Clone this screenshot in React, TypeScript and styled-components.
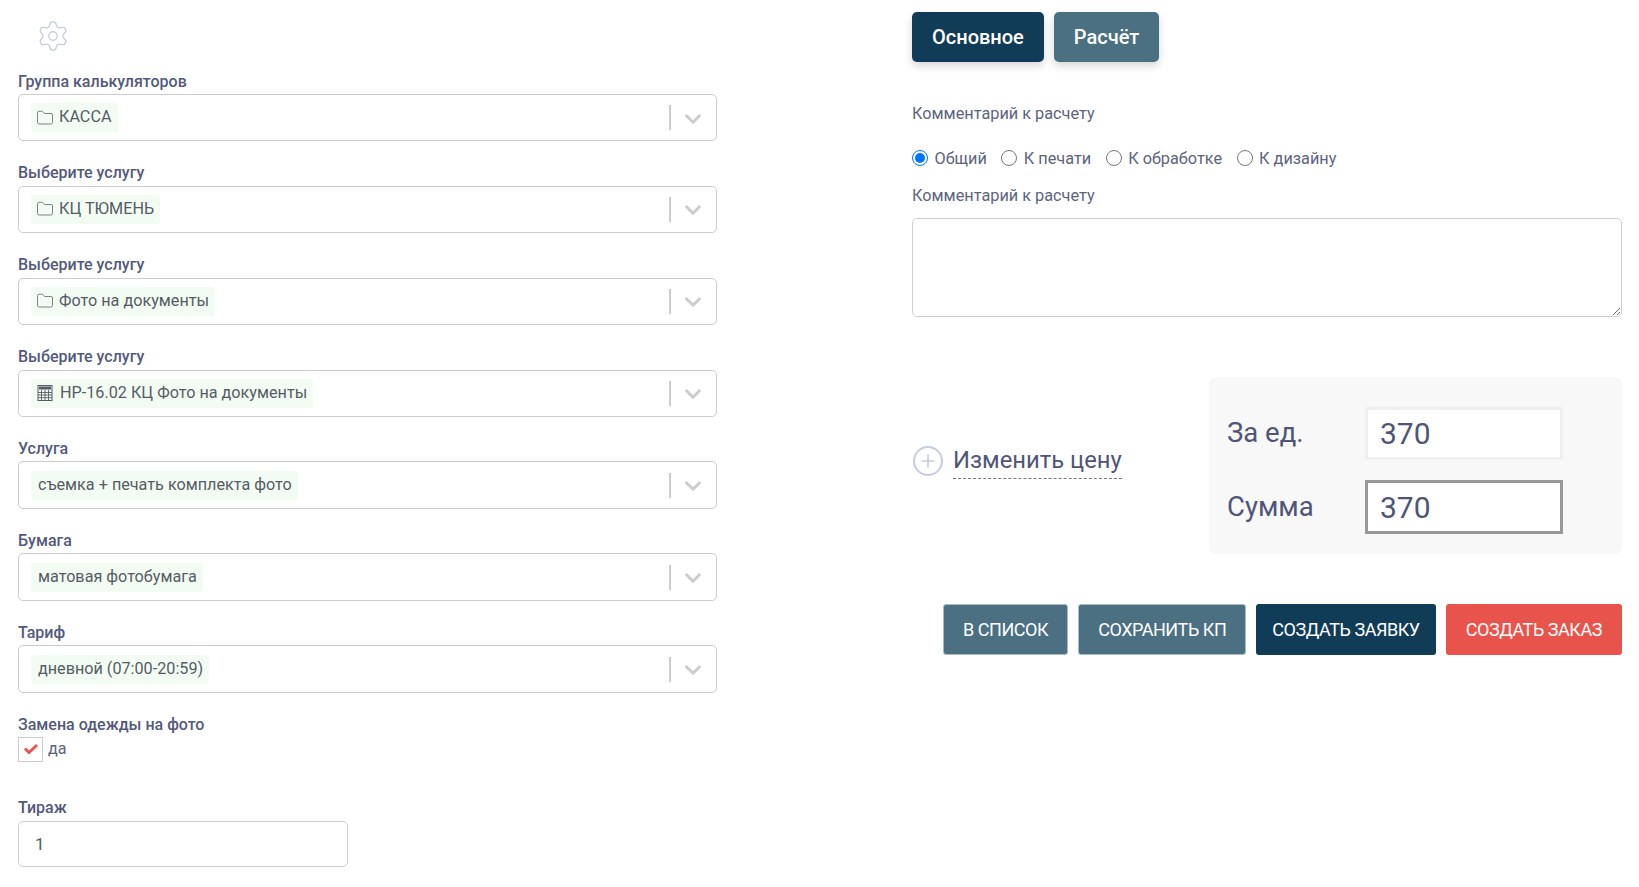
import React from "react";
import styled, { createGlobalStyle } from "styled-components";
import { Settings, Folder, ChevronDown, Plus } from "lucide-react";

const Global = createGlobalStyle`
  html, body { margin: 0; padding: 0; background: #fff; }
  body { font-family: Roboto, "Liberation Sans", sans-serif; color: #4f5578; }
  * { box-sizing: border-box; }
`;

const Page = styled.div`
  width: 1639px;
  height: 887px;
  overflow: hidden;
  display: grid;
  grid-template-columns: 912px 716px;
  background: #fff;
`;

const LeftColumn = styled.div`
  padding: 19px 0 0 18px;
  width: 716px;
`;

const GearRow = styled.div`
  height: 34px;
  padding-left: 18px;
  margin-bottom: 18px;
  color: #c3cce0;
  display: flex;
  align-items: center;
`;

const Field = styled.div<{ $tall?: boolean }>`
  margin-bottom: ${(p) => (p.$tall ? 20.85 : 21.85)}px;
`;

const Label = styled.div`
  font-size: 16px;
  line-height: 22px;
  margin-top: -0.4px;
  margin-bottom: 1.4px;
  font-weight: 500;
  color: #535a7c;
  white-space: nowrap;
`;

const SelectBox = styled.div<{ $tall?: boolean }>`
  width: 699px;
  height: ${(p) => (p.$tall ? 48 : 47)}px;
  border: 1px solid #ccc;
  border-radius: 5px;
  display: flex;
  align-items: center;
  padding-left: 12px;
  background: #fff;
`;

const Chip = styled.div`
  height: 29px;
  display: inline-flex;
  align-items: center;
  gap: 5px;
  padding: 0 6px 2px 5px;
  background: #f3fcf3;
  border-radius: 4px;
  font-size: 16.2px;
  color: #555c66;
  white-space: nowrap;
`;

const PlainChipText = styled.span`
  padding-left: 2px;
`;

const CalcChipText = styled.span`
  padding-left: 1px;
`;

const IconSlot = styled.span`
  display: flex;
  padding-top: 2px;
`;

const Indicators = styled.div`
  margin-left: auto;
  display: flex;
  align-items: center;
  height: 25px;
  padding-right: 8px;
  color: #cccccc;
`;

const Divider = styled.span`
  width: 2px;
  height: 25px;
  background: #ccc;
  margin-right: 7px;
`;

const ChevronBox = styled.span`
  width: 30px;
  height: 30px;
  display: flex;
  align-items: center;
  justify-content: center;
  padding-top: 2px;
`;

const CheckRow = styled.div`
  display: flex;
  align-items: flex-start;
  gap: 5px;
  margin-bottom: 35px;
`;

const CheckBox = styled.span`
  width: 25px;
  height: 25px;
  border: 1px solid #ccc;
  display: flex;
  align-items: center;
  justify-content: center;
  color: #e8534b;
`;

const CheckLabel = styled.span`
  font-size: 16.2px;
  line-height: 24px;
  color: #5d6480;
`;

const NumberInput = styled.div`
  width: 330px;
  height: 46px;
  margin-top: 2px;
  border: 1px solid #ccd0da;
  border-radius: 5px;
  display: flex;
  align-items: center;
  padding-left: 16px;
  font-size: 17px;
  color: #555c66;
`;

const RightColumn = styled.div`
  width: 710px;
  padding-top: 12px;
  display: flex;
  flex-direction: column;
`;

const Tabs = styled.div`
  display: flex;
  gap: 10px;
  margin-bottom: 41px;
`;

const Tab = styled.div<{ $active?: boolean }>`
  height: 50px;
  padding: 0 20px;
  display: flex;
  align-items: center;
  border-radius: 5px;
  color: #fff;
  font-size: 20px;
  font-weight: 500;
  background: ${(p) => (p.$active ? "#113c57" : "#4a7082")};
  box-shadow: 0 4px 8px rgba(0, 0, 0, 0.16);
`;

const PlainText = styled.div`
  font-size: 16.3px;
  line-height: 22px;
  color: #5d6480;
`;

const RadioRow = styled.div`
  display: flex;
  align-items: center;
  gap: 14.5px;
  margin: 22px 0 16px;
  height: 22px;
`;

const RadioItem = styled.label`
  display: flex;
  align-items: center;
  gap: 6.5px;
  font-size: 16.3px;
  color: #5d6480;
`;

const RadioDot = styled.span<{ $on?: boolean }>`
  width: 16px;
  height: 16px;
  border-radius: 50%;
  border: ${(p) => (p.$on ? "1.5px solid #0075ff" : "1px solid #767676")};
  background: #fff;
  display: flex;
  align-items: center;
  justify-content: center;
  &::after {
    content: "";
    display: ${(p) => (p.$on ? "block" : "none")};
    width: 10px;
    height: 10px;
    border-radius: 50%;
    background: #0075ff;
  }
`;

const CommentArea = styled.textarea`
  display: block;
  width: 710px;
  height: 99px;
  margin-top: 11px;
  border: 1px solid #ccd0da;
  border-radius: 5px;
  background: #fff;
  outline: none;
`;

const PriceRow = styled.div`
  display: flex;
  align-items: center;
  justify-content: space-between;
  margin-top: 60px;
`;

const ChangePrice = styled.div`
  display: flex;
  align-items: center;
  padding-left: 1px;
  margin-bottom: 10px;
  gap: 10px;
`;

const PlusCircle = styled.span`
  width: 30px;
  height: 30px;
  border: 2px solid #c3cce0;
  border-radius: 50%;
  color: #c3cce0;
  display: flex;
  align-items: center;
  justify-content: center;
`;

const ChangeLink = styled.span`
  font-size: 23.8px;
  line-height: 36px;
  color: #4f5578;
  border-bottom: 1px dashed #777;
`;

const PricePanel = styled.div`
  width: 413px;
  height: 177px;
  background: #f8f8f8;
  border-radius: 7px;
  padding: 30px 0 0 18px;
`;

const PriceLine = styled.div`
  display: flex;
  align-items: center;
  margin-bottom: 20px;
`;

const PriceLabel = styled.span`
  width: 138px;
  padding-bottom: 2px;
  font-size: 27.5px;
  color: #4f5578;
`;

const PriceInput = styled.div<{ $strong?: boolean }>`
  width: 198px;
  height: ${(p) => (p.$strong ? 54 : 53)}px;
  background: #fff;
  border: 3px solid ${(p) => (p.$strong ? "#999" : "#f0f0f0")};
  display: flex;
  align-items: center;
  padding-left: 12px;
  font-size: 30px;
  color: #4f5578;
`;

const Actions = styled.div`
  display: flex;
  justify-content: flex-end;
  gap: 10px;
  margin-top: 50px;
`;

const ActionButton = styled.div<{ $bg: string; $edge?: boolean; $pad?: number }>`
  height: 51px;
  padding: 0 ${(p) => p.$pad ?? 19}px;
  display: flex;
  align-items: center;
  border-radius: 3px;
  background: ${(p) => p.$bg};
  border: ${(p) => (p.$edge ? "1px solid #a9bbc9" : "none")};
  color: #fff;
  font-size: 18px;
  letter-spacing: -0.45px;
  white-space: nowrap;
`;

const GridCalculator = () => (
  <svg width="18" height="18" viewBox="0 0 18 18" fill="none" stroke="currentColor" strokeWidth="1">
    <rect x="2" y="1.5" width="14" height="15" />
    <rect x="3" y="2.5" width="12" height="3" fill="currentColor" stroke="none" />
    <path d="M2 8.5h14M2 11h14M2 13.7h14M5.5 6v10.5M9 6v10.5M12.5 6v10.5" strokeWidth="0.9" />
  </svg>
);

const RedCheck = () => (
  <svg width="16" height="12" viewBox="0 0 16 12" fill="none" stroke="currentColor" strokeWidth="3">
    <path d="M2 5.5l4 4 8-7.5" />
  </svg>
);

const selects: { label: string; value: string; icon?: "folder" | "calc"; tall?: boolean }[] = [
  { label: "Группа калькуляторов", value: "КАССА", icon: "folder" },
  { label: "Выберите услугу", value: "КЦ ТЮМЕНЬ", icon: "folder" },
  { label: "Выберите услугу", value: "Фото на документы", icon: "folder" },
  { label: "Выберите услугу", value: "НР-16.02 КЦ Фото на документы", icon: "calc" },
  { label: "Услуга", value: "съемка + печать комплекта фото", tall: true },
  { label: "Бумага", value: "матовая фотобумага", tall: true },
  { label: "Тариф", value: "дневной (07:00-20:59)", tall: true },
];

export default function App() {
  return (
    <Page>
      <Global />
      <LeftColumn>
        <GearRow>
          <Settings size={34} strokeWidth={0.9} />
        </GearRow>
        {selects.map((s, i) => (
          <Field key={i} $tall={s.tall}>
            <Label>{s.label}</Label>
            <SelectBox $tall={s.tall}>
              <Chip>
                {s.icon === "folder" && (
                  <IconSlot><Folder size={18} strokeWidth={1} /></IconSlot>
                )}
                {s.icon === "calc" && (
                  <IconSlot><GridCalculator /></IconSlot>
                )}
                {s.icon === "folder" && s.value}
                {s.icon === "calc" && <CalcChipText>{s.value}</CalcChipText>}
                {!s.icon && <PlainChipText>{s.value}</PlainChipText>}
              </Chip>
              <Indicators>
                <Divider />
                <ChevronBox>
                  <ChevronDown size={26} strokeWidth={2.8} />
                </ChevronBox>
              </Indicators>
            </SelectBox>
          </Field>
        ))}
        <Label>Замена одежды на фото</Label>
        <CheckRow>
          <CheckBox>
            <RedCheck />
          </CheckBox>
          <CheckLabel>да</CheckLabel>
        </CheckRow>
        <Label>Тираж</Label>
        <NumberInput>1</NumberInput>
      </LeftColumn>
      <RightColumn>
        <Tabs>
          <Tab $active>Основное</Tab>
          <Tab>Расчёт</Tab>
        </Tabs>
        <PlainText>Комментарий к расчету</PlainText>
        <RadioRow>
          <RadioItem><RadioDot $on />Общий</RadioItem>
          <RadioItem><RadioDot />К печати</RadioItem>
          <RadioItem><RadioDot />К обработке</RadioItem>
          <RadioItem><RadioDot />К дизайну</RadioItem>
        </RadioRow>
        <PlainText>Комментарий к расчету</PlainText>
        <CommentArea />
        <PriceRow>
          <ChangePrice>
            <PlusCircle><Plus size={20} strokeWidth={2} /></PlusCircle>
            <ChangeLink>Изменить цену</ChangeLink>
          </ChangePrice>
          <PricePanel>
            <PriceLine>
              <PriceLabel>За ед.</PriceLabel>
              <PriceInput>370</PriceInput>
            </PriceLine>
            <PriceLine>
              <PriceLabel>Сумма</PriceLabel>
              <PriceInput $strong>370</PriceInput>
            </PriceLine>
          </PricePanel>
        </PriceRow>
        <Actions>
          <ActionButton $bg="#4a7082" $edge>В СПИСОК</ActionButton>
          <ActionButton $bg="#4a7082" $edge>СОХРАНИТЬ КП</ActionButton>
          <ActionButton $bg="#113c57" $pad={16}>СОЗДАТЬ ЗАЯВКУ</ActionButton>
          <ActionButton $bg="#e8534b" $pad={20}>СОЗДАТЬ ЗАКАЗ</ActionButton>
        </Actions>
      </RightColumn>
    </Page>
  );
}
